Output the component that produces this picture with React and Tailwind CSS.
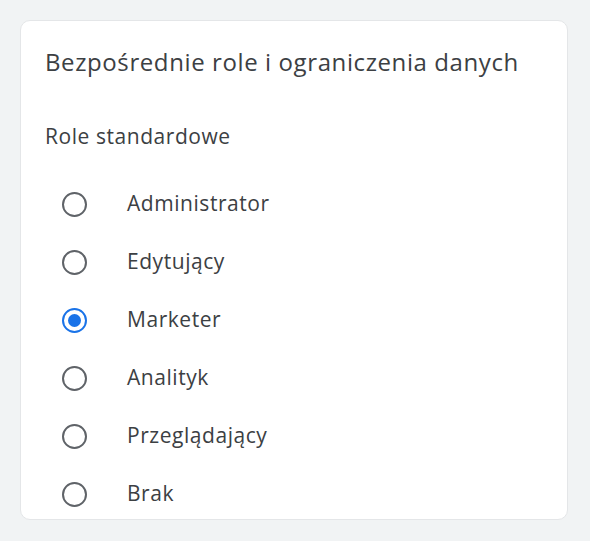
import React, { useState } from "react";

const roles = ["Administrator", "Edytujący", "Marketer", "Analityk", "Przeglądający", "Brak"];

const Radio = ({ checked }) => (
  <span
    className={`flex h-[25px] w-[25px] items-center justify-center rounded-full border-2 ${
      checked ? "border-[#1a73e8]" : "border-[#5f6368]"
    }`}
  >
    {checked && <span className="h-[13px] w-[13px] rounded-full bg-[#1a73e8]" />}
  </span>
);

const App = () => {
  const [selected, setSelected] = useState("Marketer");

  return (
    <div className="min-h-[541px] w-[590px] bg-[#f1f3f4] pt-[20px] pl-[20px] font-['Open_Sans',sans-serif]">
      <div className="h-[500px] w-[548px] overflow-hidden rounded-[10px] border border-[#e4e6e8] bg-white pt-[25px] pl-[24px]">
        <h2 className="text-[24px] leading-[32px] tracking-[0.6px] text-[#3c4043]">
          Bezpośrednie role i ograniczenia danych
        </h2>

        <p className="mt-[46px] text-[21px] leading-[24px] tracking-[0.55px] text-[#3c4043]">
          Role standardowe
        </p>

        <div className="mt-[27px] flex flex-col">
          {roles.map((role) => (
            <label
              key={role}
              onClick={() => setSelected(role)}
              className="flex h-[58px] cursor-pointer items-center"
            >
              <span className="ml-[17px] w-[65px]">
                <Radio checked={selected === role} />
              </span>
              <span className="text-[21px] tracking-[0.55px] text-[#3c4043]">{role}</span>
            </label>
          ))}
        </div>
      </div>
    </div>
  );
};

export default App;
